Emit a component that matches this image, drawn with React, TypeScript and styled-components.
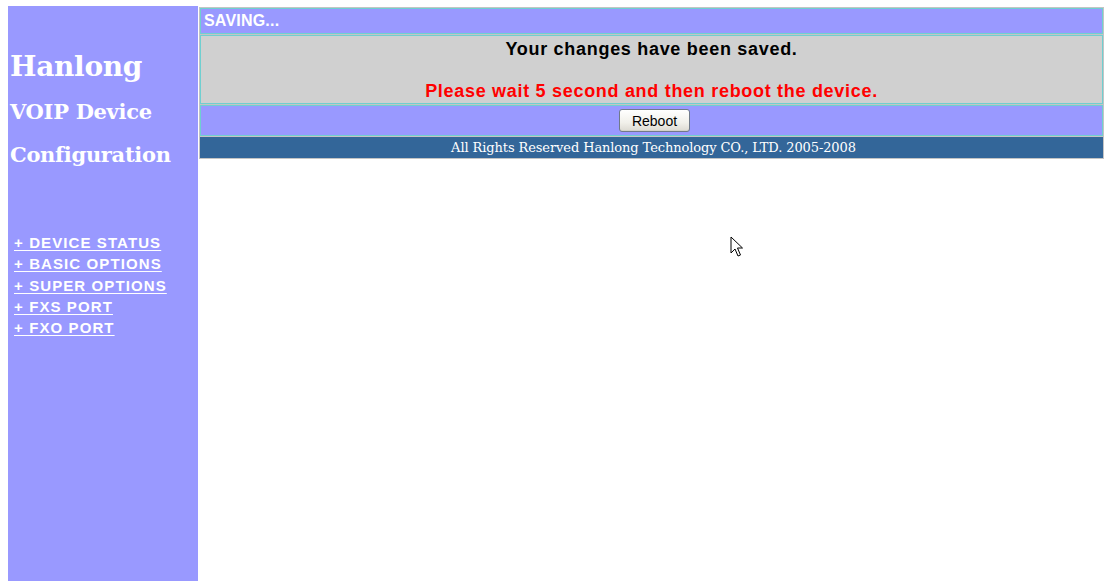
import React from "react";
import styled, { createGlobalStyle } from "styled-components";

const GlobalStyle = createGlobalStyle`
  html, body { background: #ffffff; }
  body {
    margin: 6px 0 0 8px;
    font-family: "Liberation Sans", Arial, sans-serif;
    overflow: hidden;
  }
`;

const Page = styled.div`
  display: flex;
  align-items: flex-start;
  gap: 1px;
  height: 575px;
  position: relative;
`;

const Sidebar = styled.nav`
  width: 190px;
  flex: none;
  height: 100%;
  background: #9999ff;
  display: flex;
  flex-direction: column;
`;

const Brand = styled.div<{ $top: number; $size: number }>`
  font-family: "DejaVu Serif", Georgia, serif;
  font-weight: bold;
  color: #ffffff;
  padding-left: 2px;
  margin-top: ${(p) => p.$top}px;
  font-size: ${(p) => p.$size}px;
  line-height: 1;
  letter-spacing: -0.3px;
`;

const NavList = styled.ul`
  list-style: none;
  margin: 67px 0 0 0;
  padding: 0 0 0 6px;
  display: flex;
  flex-direction: column;
`;

const NavLink = styled.a`
  display: inline-block;
  color: #ffffff;
  font-family: "Liberation Sans", Arial, sans-serif;
  font-weight: bold;
  font-size: 15px;
  letter-spacing: 1.1px;
  line-height: 21.3px;
  text-decoration: underline;
  text-underline-offset: 2px;
`;

const Main = styled.div`
  flex: 1;
  margin-top: 1px;
  margin-right: 2px;
  background: #c4c4c4;
  padding: 1px;
  display: flex;
  flex-direction: column;
  gap: 1px;
`;

const Cell = styled.div<{ $bg: string; $h: number }>`
  background: ${(p) => p.$bg};
  border: 1px solid #6fcfd0;
  height: ${(p) => p.$h}px;
  box-sizing: border-box;
`;

const TitleCell = styled(Cell)`
  color: #ffffff;
  font-weight: bold;
  font-size: 16px;
  padding: 1px 0 0 3px;
  line-height: 22px;
  letter-spacing: 0.2px;
`;

const MessageCell = styled(Cell)`
  display: flex;
  flex-direction: column;
  align-items: center;
  font-weight: bold;
  font-size: 18px;
  letter-spacing: 0.7px;
  padding-top: 2px;
`;

const Message = styled.div<{ $color: string }>`
  color: ${(p) => p.$color};
  line-height: 22px;
  height: 22px;
  margin-bottom: 20px;
  &:last-child { margin-bottom: 0; }
`;

const ActionCell = styled(Cell)`
  display: flex;
  justify-content: center;
  align-items: center;
  padding-left: 6px;
`;

const Button = styled.button`
  font-family: "Liberation Sans", Arial, sans-serif;
  font-size: 14px;
  color: #000;
  height: 23px;
  width: 71px;
  padding: 0;
  border: 1px solid #6f7a8a;
  border-radius: 3px;
  background: linear-gradient(#ffffff, #f1f0ea 60%, #dcdad2);
  box-shadow: inset 0 -1px 0 #d3d1c8;
`;

const Footer = styled(Cell)`
  border: none;
  color: #ffffff;
  font-family: "DejaVu Serif", Georgia, serif;
  font-size: 13px;
  letter-spacing: -0.1px;
  text-align: center;
  line-height: 21px;
  padding-left: 4px;
`;

const Cursor = styled.svg`
  position: absolute;
  left: 722px;
  top: 230px;
`;

const links = [
  "+ DEVICE STATUS",
  "+ BASIC OPTIONS",
  "+ SUPER OPTIONS",
  "+ FXS PORT",
  "+ FXO PORT",
];

export default function App() {
  return (
    <>
      <GlobalStyle />
      <Page>
        <Sidebar>
          <Brand $top={47} $size={28}>Hanlong</Brand>
          <Brand $top={20} $size={21}>VOIP Device</Brand>
          <Brand $top={22} $size={21}>Configuration</Brand>
          <NavList>
            {links.map((l) => (
              <li key={l}>
                <NavLink href="#">{l}</NavLink>
              </li>
            ))}
          </NavList>
        </Sidebar>
        <Main>
          <TitleCell $bg="#9999ff" $h={26}>SAVING...</TitleCell>
          <MessageCell $bg="#d0d0d0" $h={69}>
            <Message $color="#000000">Your changes have been saved.</Message>
            <Message $color="#ff0000">Please wait 5 second and then reboot the device.</Message>
          </MessageCell>
          <ActionCell $bg="#9999ff" $h={31}>
            <Button>Reboot</Button>
          </ActionCell>
          <Footer $bg="#336699" $h={21}>
            All Rights Reserved Hanlong Technology CO., LTD. 2005-2008
          </Footer>
        </Main>
        <Cursor width="16" height="24" viewBox="0 0 16 24">
          <path
            d="M1 1 L1 17 L5 13 L8 20 L10.5 19 L7.5 12 L12.5 12 Z"
            fill="#ffffff"
            stroke="#000000"
            strokeWidth="1"
            strokeLinejoin="miter"
          />
        </Cursor>
      </Page>
    </>
  );
}
